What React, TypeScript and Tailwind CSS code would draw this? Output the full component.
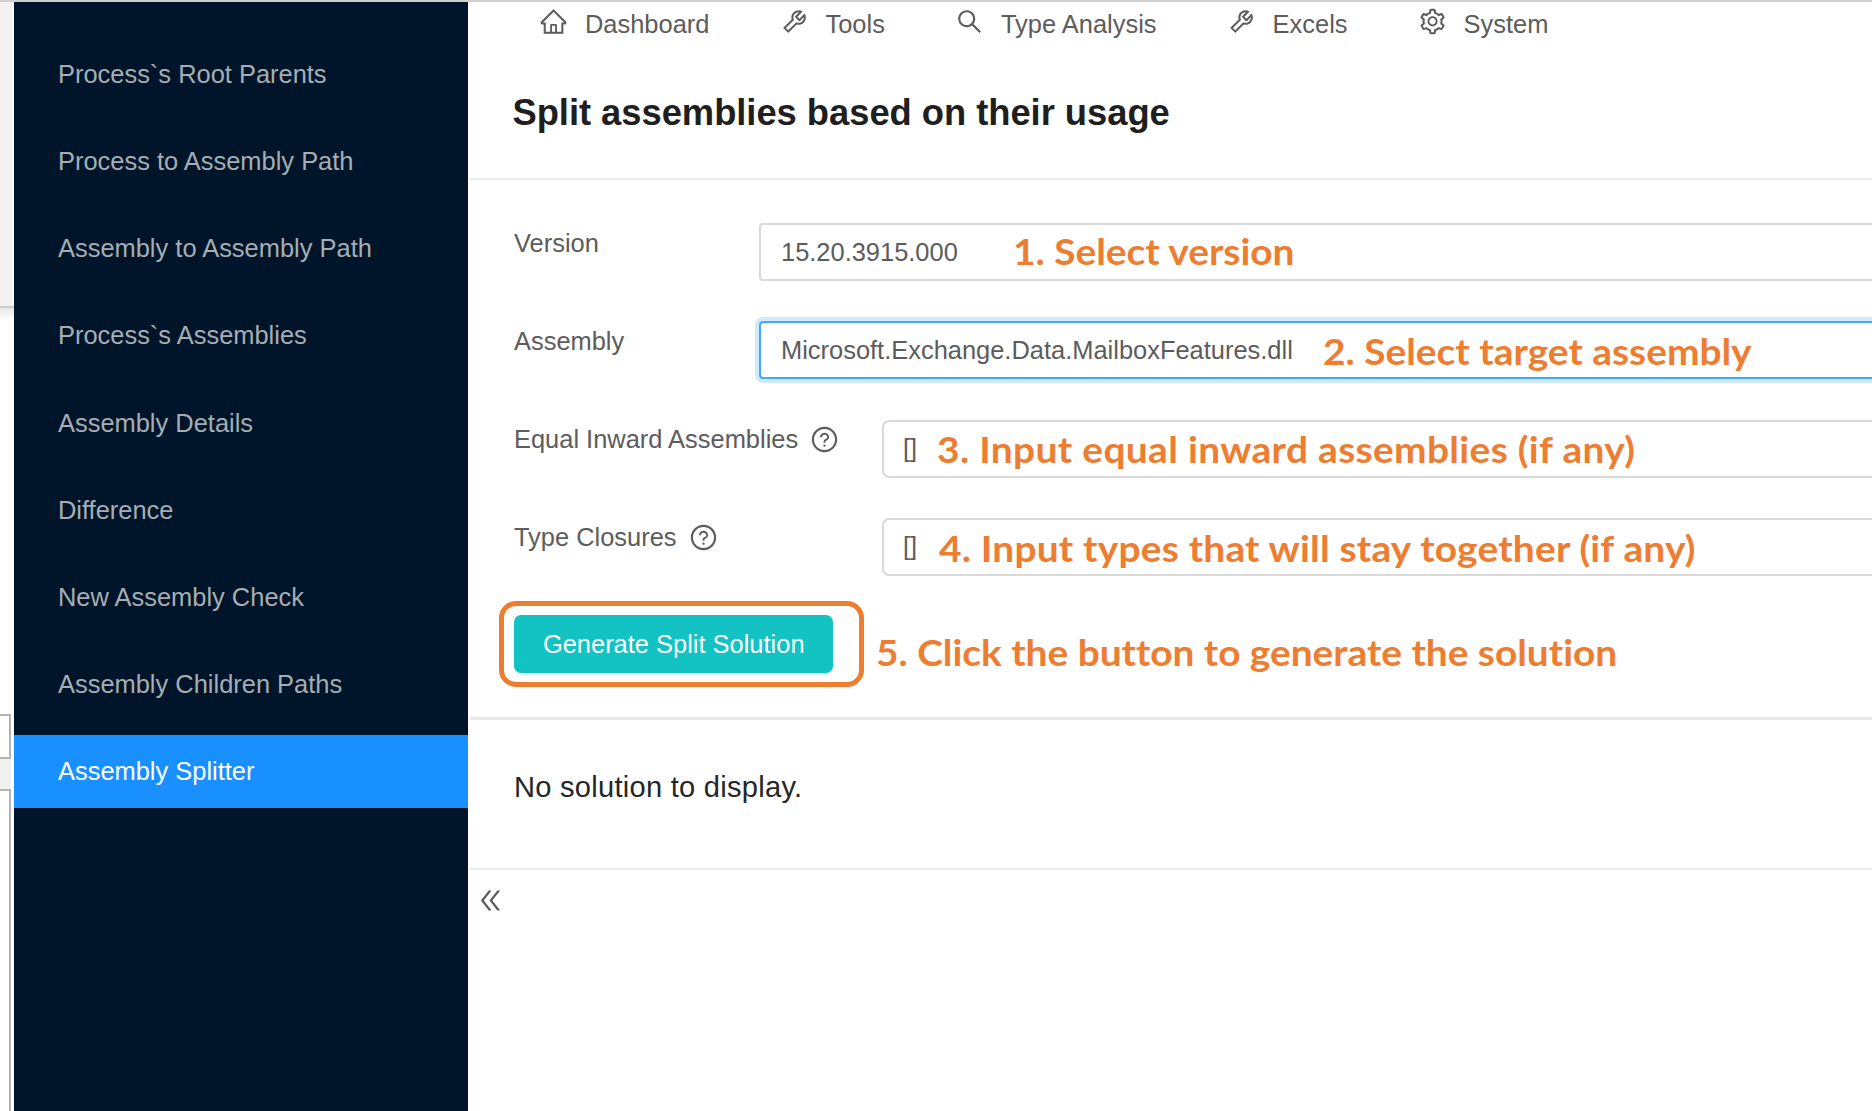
import type { ReactNode } from "react";
import type { IconType } from "react-icons";
import {
  AiOutlineDoubleLeft,
  AiOutlineHome,
  AiOutlineQuestionCircle,
  AiOutlineSearch,
  AiOutlineSetting,
  AiOutlineTool,
} from "react-icons/ai";

const sideItems = [
  "Process`s Root Parents",
  "Process to Assembly Path",
  "Assembly to Assembly Path",
  "Process`s Assemblies",
  "Assembly Details",
  "Difference",
  "New Assembly Check",
  "Assembly Children Paths",
  "Assembly Splitter",
];

const navItems: { label: string; Icon: IconType }[] = [
  { label: "Dashboard", Icon: AiOutlineHome },
  { label: "Tools", Icon: AiOutlineTool },
  { label: "Type Analysis", Icon: AiOutlineSearch },
  { label: "Excels", Icon: AiOutlineTool },
  { label: "System", Icon: AiOutlineSetting },
];

function WindowEdge() {
  return (
    <div className="flex w-[14.4px] shrink-0 flex-col bg-white">
      <div className="h-[306px] border-r-2 border-[#fafafa] bg-[#f3f2f1]" />
      <div className="h-[2px] bg-[#cfcdcb]" />
      <div className="h-[12px] bg-linear-to-b from-[#e6e6e6] to-white" />
      <div className="mt-[394px] h-[45px] w-[11px] border-y-2 border-r-2 border-[#b4b4b4]" />
      <div className="h-[30px] w-[11px] bg-[#f0f0f0]" />
      <div className="w-[11px] flex-1 border-t-2 border-r-2 border-[#b4b4b4]" />
    </div>
  );
}

function Sidebar() {
  return (
    <nav className="mt-[2px] flex w-[454px] shrink-0 flex-col gap-[14.54px] bg-[#001529] pt-[35px]">
      {sideItems.map((label) => (
        <a
          key={label}
          className={
            label === "Assembly Splitter"
              ? "flex h-[72.73px] items-center bg-[#1890ff] pt-px pl-[43.6px] text-white"
              : "flex h-[72.73px] items-center pt-[2px] pl-[43.6px] text-[#a6adb4]"
          }
        >
          {label}
        </a>
      ))}
    </nav>
  );
}

function Note({ className, children }: { className: string; children: ReactNode }) {
  return (
    <span
      className={`absolute origin-left scale-x-105 font-[Lato,sans-serif] text-[37px] leading-[44px] font-bold whitespace-nowrap text-[#ed7d31] ${className}`}
    >
      {children}
    </span>
  );
}

function Row({
  label,
  help,
  value,
  labelClass,
  inputClass,
  note,
}: {
  label: string;
  help?: boolean;
  value: string;
  labelClass: string;
  inputClass: string;
  note: ReactNode;
}) {
  return (
    <div className="flex h-[58px] items-start">
      <div className={`flex h-10 shrink-0 items-center gap-[12px] whitespace-nowrap ${labelClass}`}>
        {label}
        {help && <AiOutlineQuestionCircle className="size-[29px]" />}
      </div>
      <div className={`relative flex h-[58px] flex-1 items-center border-2 border-r-0 ${inputClass}`}>
        {value}
        {note}
      </div>
    </div>
  );
}

export default function App() {
  return (
    <div className="relative flex h-[1111px] w-[1872px] overflow-hidden bg-white font-['Liberation_Sans',Arial,sans-serif] text-[25.45px] leading-none text-[#5c5c5c]">
      <div className="absolute inset-x-0 top-0 h-[2px] bg-[#d0d0d0]" />
      <WindowEdge />
      <Sidebar />
      <main className="flex min-w-0 flex-1 flex-col pl-[2.1px]">
        <header className="flex h-[47px] items-center gap-[70.6px] pl-[69px]">
          {navItems.map(({ label, Icon }) => (
            <a key={label} className="flex items-center gap-[16.4px] whitespace-nowrap">
              <Icon className="mb-[3px] size-[29.1px]" />
              <span className="pt-[2px]">{label}</span>
            </a>
          ))}
        </header>
        <h1 className="flex h-[133px] items-center border-b-2 border-[#ebebeb] pt-[2px] pl-[42px] text-[36.36px] font-bold tracking-[-0.04px] text-[#1f1f1f]">
          Split assemblies based on their usage
        </h1>

        <section className="flex flex-col gap-[40.2px] pt-[43.3px] pl-[43.5px]">
          <Row
            label="Version"
            value="15.20.3915.000"
            labelClass="w-[245px]"
            inputClass="rounded-l-[4px] border-[#d9d9d9] pl-[20px]"
            note={<Note className="top-[4px] left-[252px]">1. Select version</Note>}
          />
          <Row
            label="Assembly"
            value="Microsoft.Exchange.Data.MailboxFeatures.dll"
            labelClass="w-[245px]"
            inputClass="rounded-l-[4px] border-[#40a9ff] pl-[20px] shadow-[0_0_0_4px_rgba(24,144,255,0.2)]"
            note={<Note className="top-[6px] left-[562px]">2. Select target assembly</Note>}
          />
          <Row
            label="Equal Inward Assemblies"
            help
            value="[]"
            labelClass="w-[368px]"
            inputClass="rounded-l-[7px] border-[#d9d9d9] pl-[19px]"
            note={
              <Note className="top-[5px] left-[53.3px] tracking-[0.33px]">
                3. Input equal inward assemblies (if any)
              </Note>
            }
          />
          <Row
            label="Type Closures"
            help
            value="[]"
            labelClass="w-[368px]"
            inputClass="rounded-l-[7px] border-[#d9d9d9] pl-[19px]"
            note={
              <Note className="top-[6px] left-[55px] tracking-[0.2px]">
                4. Input types that will stay together (if any)
              </Note>
            }
          />
        </section>

        <section className="relative flex h-[144.5px] items-start border-b-[3.5px] border-[#e8e8e8] pt-[39.5px] pl-[43.5px]">
          <button className="h-[58px] w-[319.5px] rounded-[7px] bg-[#13c2c2] text-white shadow-[0_3px_0_rgba(0,0,0,0.04)]">
            Generate Split Solution
          </button>
          <div className="absolute top-[25px] left-[28.5px] h-[86px] w-[365px] rounded-[17px] border-[5px] border-[#ed7d31]" />
          <Note className="top-[54px] left-[405.3px] tracking-[-0.02px]">
            5. Click the button to generate the solution
          </Note>
        </section>

        <p className="h-[149.5px] border-b-2 border-[#ebebeb] pt-[53px] pl-[43.5px] text-[29.1px] tracking-[0.26px] text-[#262626]">
          No solution to display.
        </p>
        <AiOutlineDoubleLeft className="mt-[16px] ml-[6px] size-[29px]" />
      </main>
    </div>
  );
}
